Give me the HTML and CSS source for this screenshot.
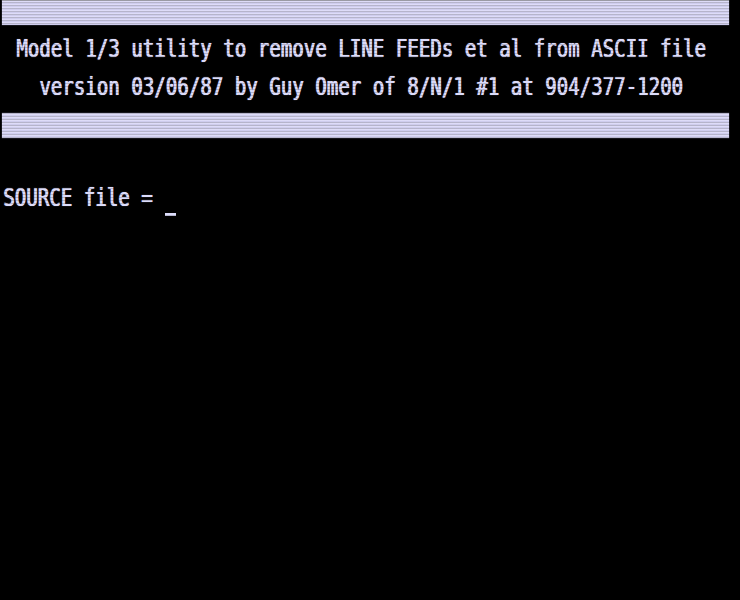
FILE: index.html
```html
<!DOCTYPE html>
<html>
<head>
<meta charset="utf-8">
<link rel="stylesheet" href="styles.css">
</head>
<body>
<div class="screen">
  <div class="bar"></div>
  <div class="header">
    <div class="line"><span class="txt">Model 1/3 utility to remove LINE FEEDs et al from ASCII file</span></div>
    <div class="line"><span class="txt">version 03/06/87 by Guy Omer of 8/N/1 #1 at 904/377-1200</span></div>
  </div>
  <div class="bar"></div>
  <div class="prompt"><span class="txt">SOURCE file = </span><span class="cursor"></span></div>
  <div class="scan"></div>
</div>
</body>
</html>
```

FILE: styles.css
```css
html, body {
  margin: 0;
  padding: 0;
  background: #000;
}
.screen {
  position: relative;
  width: 740px;
  height: 600px;
  background: #000;
  overflow: hidden;
  font-family: "DejaVu Sans Mono", monospace;
  font-size: 19.1px;
  color: #dcdcfa;
}
.bar {
  margin-left: 2px;
  width: 727px;
  height: 25px;
  background: repeating-linear-gradient(to bottom, #dedcf8 0px, #dedcf8 2px, #cfcdee 2px, #cfcdee 3px);
  box-shadow: 0 0 1px #8888aa;
}
.bar:first-child {
  border-top: 1px solid #9a9aa4;
  height: 24px;
}
.header {
  width: 722px;
  padding: 5px 0 7px;
  text-align: center;
}
.line, .prompt {
  height: 38px;
  line-height: 38px;
  white-space: pre;
}
.txt {
  display: inline-block;
  transform: scaleY(1.27);
  text-shadow: 0.7px 0 0 #dcdcfa, 0 0 1px rgba(220, 220, 255, 0.6);
}
.prompt {
  margin-top: 41px;
  padding-left: 3px;
}
.cursor {
  display: inline-block;
  width: 11px;
  height: 3px;
  margin-left: 1px;
  background: #dcdcfa;
  vertical-align: -12px;
}
.scan {
  position: absolute;
  inset: 0;
  pointer-events: none;
  background: repeating-linear-gradient(to bottom, rgba(0,0,0,0) 0px, rgba(0,0,0,0) 2px, rgba(0,0,0,0.18) 2px, rgba(0,0,0,0.18) 3px);
}
```
